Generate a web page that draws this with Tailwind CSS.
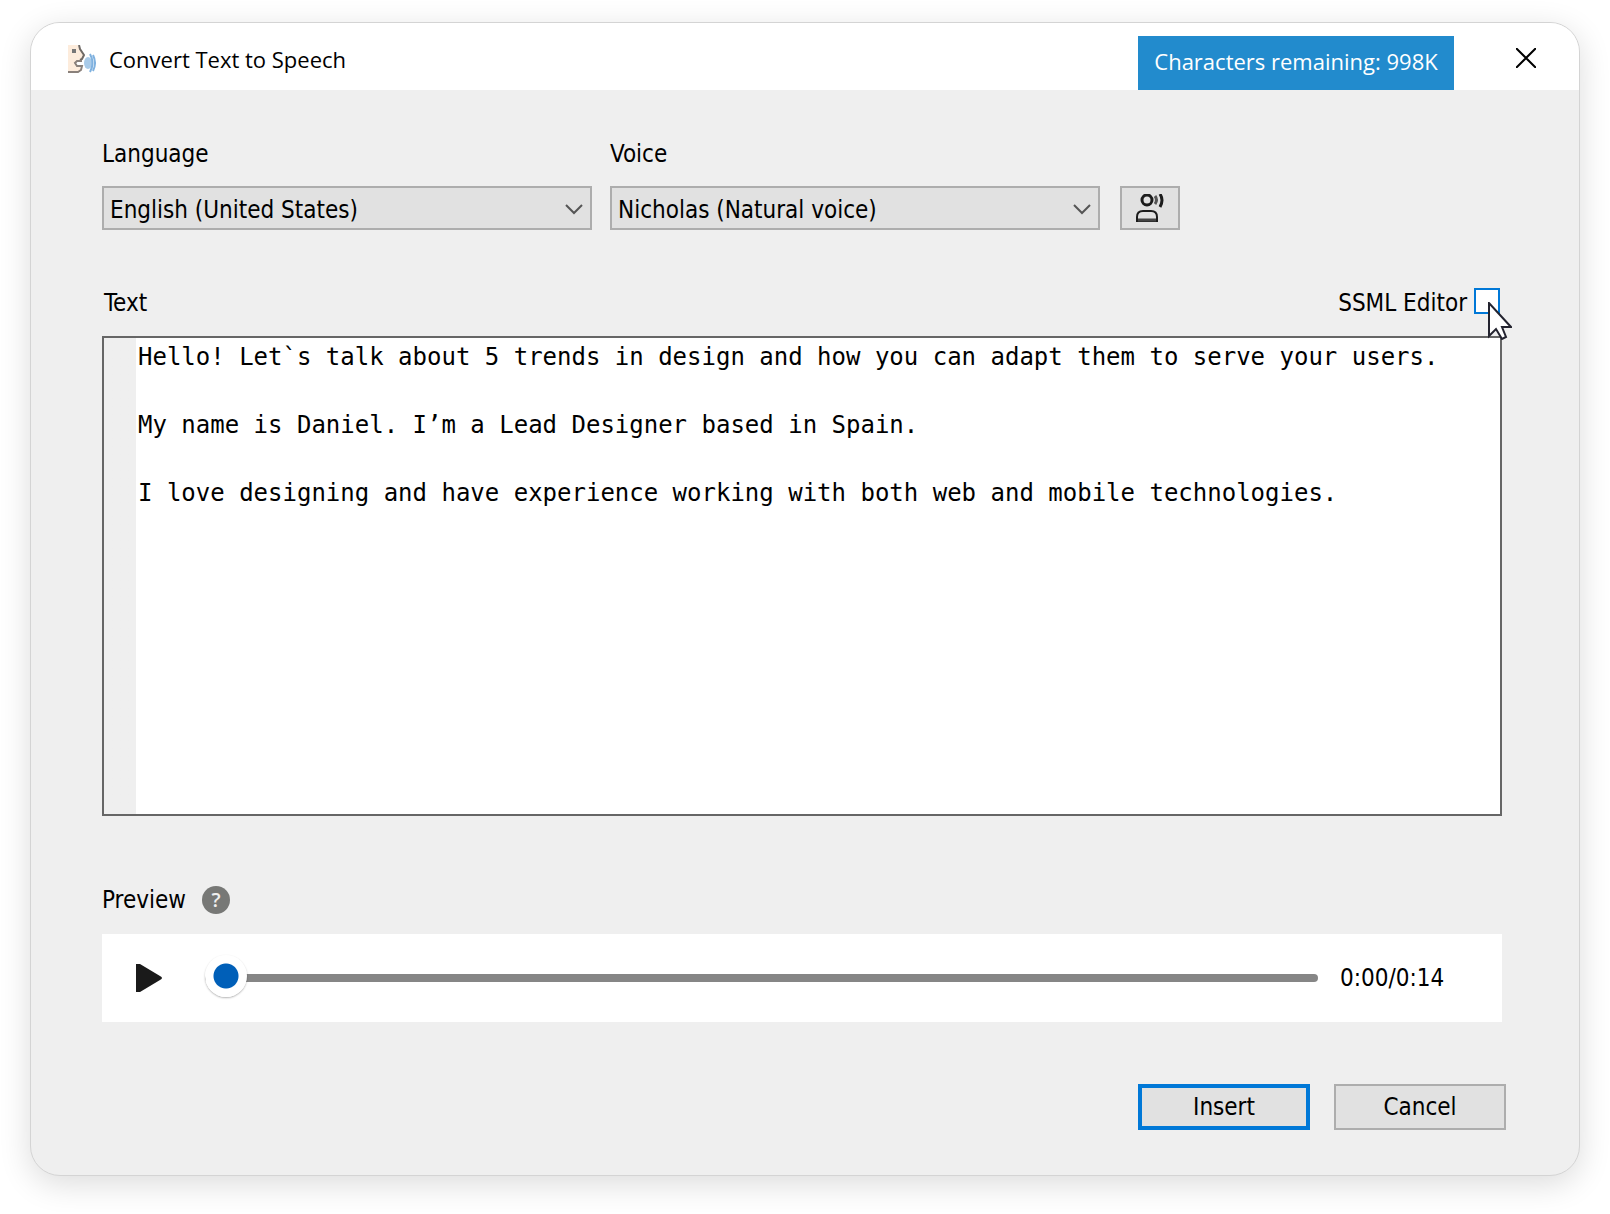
<!DOCTYPE html>
<html lang="en">
<head>
<meta charset="utf-8">
<meta name="viewport" content="width=device-width, initial-scale=1">
<title>Convert Text to Speech</title>
<script src="https://cdn.jsdelivr.net/npm/@tailwindcss/browser@4"></script>
</head>
<body class="bg-white px-[30px] pt-[22px] pb-9 text-black">
<main class="overflow-hidden rounded-[30px] border border-[#d4d4d4] bg-[#efefef] shadow-[0_8px_32px_rgba(0,0,0,0.14)]">

  <header class="flex h-[67px] items-end bg-white pl-[37px] pr-[43px] font-['Open_Sans',sans-serif] text-[22px]">
    <div class="flex h-[62px] flex-1 items-center gap-[13px]">
      <svg class="h-7 w-7" viewBox="0 0 28 28" aria-hidden="true">
        <path d="M0 0h10l2 4 4 6-3 4-5 3v4l4 1v4H0z" fill="#fdecdc"/>
        <path d="M11 0l1 4 4 6-2 4-2 1" fill="none" stroke="#6f6a66" stroke-width="2"/>
        <path d="M14 16H9l-2 2 2 3h5l-1 4-3 2H0" fill="none" stroke="#8a817b" stroke-width="2"/>
        <rect x="4" y="4" width="4" height="4" fill="#777"/>
        <ellipse cx="20" cy="18" rx="4" ry="6" fill="#a9cbe9"/>
        <path d="M22 9q5 9 0 18M25 10q4 8 0 16" fill="none" stroke="#7fb1df" stroke-width="2"/>
      </svg>
      <h1>Convert Text to Speech</h1>
    </div>
    <p class="flex h-[54px] w-[316px] items-center justify-center bg-[#228bcd] pb-1 text-white">Characters remaining: 998K</p>
    <button type="button" aria-label="Close" class="ml-[62px] mb-[22px]">
      <svg class="block h-5 w-5" viewBox="0 0 20 20" fill="none" stroke="#000" stroke-width="2" aria-hidden="true"><path d="M0 0L20 20M20 0L0 20"/></svg>
    </button>
  </header>

  <form class="pt-12 pb-[45px] pl-[71px] pr-[77px] font-['DejaVu_Sans_Condensed','DejaVu_Sans',sans-serif] text-2xl">
    <div class="flex items-end">
      <div class="w-[490px]">
        <label for="language" class="block h-12">Language</label>
        <div class="relative">
          <select id="language" class="block h-11 w-full appearance-none border-2 border-[#adadad] bg-[#e1e1e1] px-1.5 pt-1 leading-8"><option>English (United States)</option></select>
          <svg class="pointer-events-none absolute right-[9px] top-[18px] h-[11px] w-[18px]" viewBox="0 0 18 11" fill="none" stroke="#555" stroke-width="2" aria-hidden="true"><path d="M1 1l8 8 8-8"/></svg>
        </div>
      </div>
      <div class="ml-[18px] w-[490px]">
        <label for="voice" class="block h-12">Voice</label>
        <div class="relative">
          <select id="voice" class="block h-11 w-full appearance-none border-2 border-[#adadad] bg-[#e1e1e1] px-1.5 pt-1 leading-8"><option>Nicholas (Natural voice)</option></select>
          <svg class="pointer-events-none absolute right-[9px] top-[18px] h-[11px] w-[18px]" viewBox="0 0 18 11" fill="none" stroke="#555" stroke-width="2" aria-hidden="true"><path d="M1 1l8 8 8-8"/></svg>
        </div>
      </div>
      <button type="button" aria-label="Listen to voice" class="ml-5 flex h-11 w-[60px] items-center justify-center border-2 border-[#adadad] bg-[#e1e1e1]">
        <svg class="h-7 w-7" viewBox="0 0 28 28" fill="none" stroke="#1c1c1c" stroke-width="2" aria-hidden="true">
          <circle cx="11" cy="6" r="5" stroke-width="3"/>
          <path d="M1 27v-4q0-6 6-6h8q6 0 6 6v4z"/>
          <path d="M2 26h18" stroke="#444" stroke-width="3"/>
          <path d="M19 2q3 4 0 8" stroke="#555" stroke-width="3"/>
          <path d="M24 0q4 6 0 13" stroke-width="3"/>
        </svg>
      </button>
    </div>

    <div class="mt-14 mb-4 flex h-[34px] items-center justify-between">
      <label for="speech-text" class="pl-0.5">Text</label>
      <div class="relative flex items-center gap-[7px] pr-0.5">
        <label for="ssml">SSML Editor</label>
        <input id="ssml" type="checkbox" class="mb-1 h-[26px] w-[26px] appearance-none border-2 border-[#0078d7] bg-white">
        <svg class="pointer-events-none absolute -right-2.5 top-[15px] z-10 h-[38px] w-6" viewBox="0 0 24 38" aria-hidden="true"><path d="M1 1v33l7-7 6 10 4-2-4-10h9z" fill="#fff" stroke="#23232f" stroke-width="2"/></svg>
      </div>
    </div>
    <textarea id="speech-text" spellcheck="false" class="block h-[480px] w-full resize-none border-2 border-[#666] bg-linear-to-r from-[#efefef] from-[32px] to-white to-[32px] pt-0.5 pl-[34px] font-['DejaVu_Sans_Mono',monospace] text-2xl leading-[34px]">Hello! Let`s talk about 5 trends in design and how you can adapt them to serve your users.

My name is Daniel. I’m a Lead Designer based in Spain.

I love designing and have experience working with both web and mobile technologies.</textarea>

    <div class="mt-[67px] mb-[17px] flex h-[34px] items-center gap-4">
      <h2>Preview</h2>
      <button type="button" aria-label="About preview" class="flex h-7 w-7 items-center justify-center rounded-full bg-[#777876] font-['Open_Sans',sans-serif] text-xl font-semibold leading-7 text-[#efefef]">?</button>
    </div>
    <section aria-label="Player" class="flex h-[88px] items-center bg-white pl-[34px] pr-[53px]">
      <button type="button" aria-label="Play">
        <svg class="block h-7 w-[26px]" viewBox="0 0 26 28" fill="#1a1a1a" aria-hidden="true"><path d="M0 0h4l20 12q4 2 0 4L4 28H0z"/></svg>
      </button>
      <input type="range" aria-label="Position" min="0" max="14" value="0" class="ml-[43px] block h-[42px] flex-1 appearance-none bg-transparent [&::-webkit-slider-runnable-track]:h-2 [&::-webkit-slider-runnable-track]:rounded-full [&::-webkit-slider-runnable-track]:bg-[#868686] [&::-webkit-slider-thumb]:mt-[-19px] [&::-webkit-slider-thumb]:h-[42px] [&::-webkit-slider-thumb]:w-[42px] [&::-webkit-slider-thumb]:appearance-none [&::-webkit-slider-thumb]:rounded-full [&::-webkit-slider-thumb]:bg-[radial-gradient(circle,#005fb8_12px,#fff_13px)] [&::-webkit-slider-thumb]:shadow-[0_1px_2px_rgba(0,0,0,0.3)]">
      <span class="ml-[22px] w-[109px]">0:00/0:14</span>
    </section>

    <div class="-mr-1 mt-[62px] flex justify-end gap-6">
      <button type="submit" class="h-[46px] w-[172px] border-4 border-[#0078d7] bg-[#e1e1e1]">Insert</button>
      <button type="button" class="h-[46px] w-[172px] border-2 border-[#adadad] bg-[#e1e1e1]">Cancel</button>
    </div>
  </form>
</main>
</body>
</html>
